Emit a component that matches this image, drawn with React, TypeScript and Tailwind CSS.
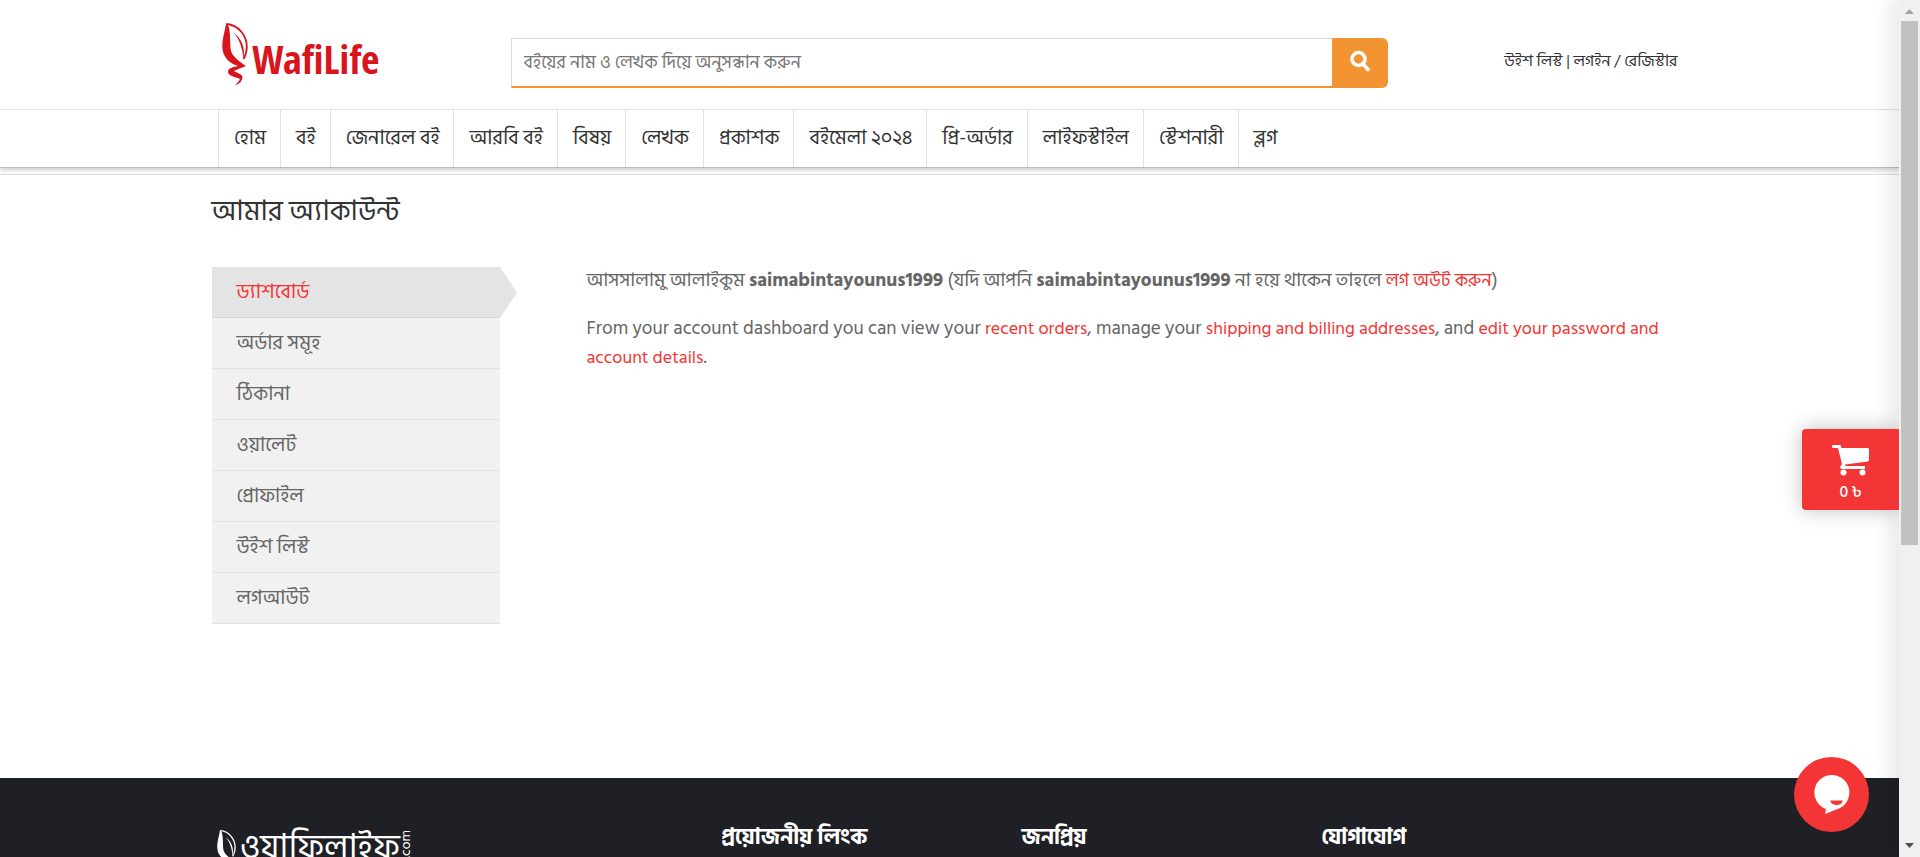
import type { ReactNode } from "react";

const navItems = [
  "হোম",
  "বই",
  "জেনারেল বই",
  "আরবি বই",
  "বিষয়",
  "লেখক",
  "প্রকাশক",
  "বইমেলা ২০২৪",
  "প্রি-অর্ডার",
  "লাইফস্টাইল",
  "স্টেশনারী",
  "ব্লগ",
];

const accountLinks = ["অর্ডার সমূহ", "ঠিকানা", "ওয়ালেট", "প্রোফাইল", "উইশ লিস্ট", "লগআউট"];

function Leaf({ className }: { className: string }) {
  return (
    <svg viewBox="0 0 26 63" className={className} fill="currentColor" aria-hidden="true">
      <path d="M4 0C3 9 .3 14 .3 24 .5 35 9 41 16 43c-5 1-10 2-10 6 0 4 8 5 12 7-1 2.500-3 4-5 6 5-1 7-4 7.500-8C20 51 15 50 12 48c3-2 8-3 12-5C17 38 11 34 9 28 7.500 21 9 11 6.500 3Z" />
      <path d="M4.500 1C17 2 24.800 13 24.800 24c0 5-1.500 9-3.300 12" fill="none" stroke="currentColor" strokeWidth="1.800" />
      <path d="M12 10c7 5 11.500 14 9.500 26C20.500 26 18 17 12 10Z" />
    </svg>
  );
}

function RedLink({ children }: { children: ReactNode }) {
  return (
    <a href="#" className="text-lg leading-[29px] text-[#f33535]">
      {children}
    </a>
  );
}

function Scrollbar() {
  return (
    <div className="flex w-[21px] shrink-0 flex-col items-center bg-[#f0f0f0]" aria-hidden="true">
      <svg viewBox="0 0 21 21" className="h-[21px] w-[21px] shrink-0">
        <path d="M6 14h9l-4.500-5z" fill="#a3a3a3" />
      </svg>
      <div className="h-[524px] w-[17px] bg-[#c1c1c1]" />
      <svg viewBox="0 0 21 21" className="mt-auto h-[21px] w-[21px] shrink-0">
        <path d="M6 7h9l-4.500 5z" fill="#505050" />
      </svg>
    </div>
  );
}

export default function App() {
  return (
    <div className="flex h-screen overflow-hidden bg-white font-['Hind_Siliguri','Noto_Sans_Bengali','Noto_Sans',sans-serif] text-[#666]">
      <div className="relative flex min-w-0 flex-1 flex-col overflow-hidden">
        <header className="shrink-0 border-b border-[#bdbdbd] text-[#333] shadow-[0_2px_5px_rgba(0,0,0,0.2)]">
          <div className="mx-auto flex h-[109px] max-w-[1476px] items-center">
            <a href="#" aria-label="WafiLife" className="ml-2.5 flex w-[289px] items-start text-[#d8141c]">
              <Leaf className="h-[63px] w-[26px]" />
              <svg viewBox="0 0 132 63" className="ml-1 h-[63px] w-[132px]" aria-hidden="true">
                <text x="0" y="51" fontSize="40" fontWeight="700" fill="currentColor" fontFamily="'Liberation Sans Narrow','Open Sans Condensed','DejaVu Sans Condensed',sans-serif">
                  WafiLife
                </text>
              </svg>
            </a>
            <form className="mt-4 flex h-[50px] w-[877px]">
              <input
                type="text"
                aria-label="বইয়ের নাম ও লেখক দিয়ে অনুসন্ধান করুন"
                placeholder="বইয়ের নাম ও লেখক দিয়ে অনুসন্ধান করুন"
                className="min-w-0 flex-1 border border-b-2 border-r-0 border-[#d9d9d9] border-b-[#f39433] px-3 pt-0.5 text-lg text-[#777] outline-none placeholder:text-[#777]"
              />
              <button type="button" aria-label="Search" className="flex w-14 items-center justify-center rounded-r-md bg-[#f39433] pb-1 text-white">
                <svg viewBox="0 0 20 22" className="h-[22px] w-5" fill="none" stroke="currentColor" aria-hidden="true">
                  <circle cx="8.500" cy="9" r="6.500" strokeWidth="3.600" />
                  <path d="m13 14 5 5.500" strokeWidth="3.600" strokeLinecap="round" />
                </svg>
              </button>
            </form>
            <div className="ml-auto mr-2.5 mt-3 text-base">
              <a href="#">উইশ লিস্ট</a> | <a href="#">লগইন / রেজিস্টার</a>
            </div>
          </div>
          <nav className="border-t border-[#e1e1e1]">
            <ul className="mx-auto flex h-[57px] max-w-[1463px]">
              {navItems.map((label) => (
                <li key={label} className="flex border-l border-[#e1e1e1]">
                  <a href="#" className="flex items-center whitespace-nowrap pb-0.5 pl-[15px] pr-3.5 text-xl">
                    {label}
                  </a>
                </li>
              ))}
            </ul>
          </nav>
        </header>
        <div className="mt-1.5 shrink-0 border-t border-[#ddd]" />

        <main className="mx-auto w-full max-w-[1476px] flex-1">
          <h1 className="mt-[17px] text-[28px] leading-[40px] text-[#333]">আমার অ্যাকাউন্ট</h1>
          <div className="mt-[35px] flex">
            <nav className="w-72 shrink-0 text-xl">
              <a href="#" aria-current="page" className="relative flex h-[51px] items-center border-b border-[#d6d6d6] bg-[#e4e4e4] px-[25px] text-[#f33535]">
                ড্যাশবোর্ড
                <svg viewBox="0 0 17 51" className="absolute left-full top-0 h-[51px] w-[17px]" aria-hidden="true">
                  <path d="M0 0 17 25.500 0 51Z" fill="#e4e4e4" />
                </svg>
              </a>
              {accountLinks.map((label) => (
                <a key={label} href="#" className="flex h-[51px] items-center border-b border-[#e2e2e2] bg-[#f1f1f1] px-[25px]">
                  {label}
                </a>
              ))}
            </nav>
            <section className="ml-[87px] flex-1 text-[19px] leading-[29px]">
              <p className="-mt-px">
                আসসালামু আলাইকুম <strong>saimabintayounus1999</strong> (যদি আপনি <strong>saimabintayounus1999</strong> না হয়ে থাকেন তাহলে{" "}
                <RedLink>লগ অউট করুন</RedLink>)
              </p>
              <p className="mt-[19px]">
                From your account dashboard you can view your <RedLink>recent orders</RedLink>, manage your{" "}
                <RedLink>shipping and billing addresses</RedLink>, and <RedLink>edit your password and account details</RedLink>.
              </p>
            </section>
          </div>
        </main>

        <footer className="h-[79px] shrink-0 overflow-hidden bg-[#1f2025] text-white">
          <div className="mx-auto grid max-w-[1476px] grid-cols-[510px_300px_300px_1fr] pt-[45px] text-[22px] font-bold leading-7">
            <div className="flex h-[34px] items-start overflow-hidden pl-[5px] pt-[3px]">
              <Leaf className="h-[54px] w-[19px] shrink-0" />
              <span className="ml-1 text-[34px] font-normal leading-[43px]">ওয়াফিলাইফ</span>
              <span className="mt-1 text-sm font-normal leading-3 [writing-mode:sideways-lr]">.com</span>
            </div>
            <h2>প্রয়োজনীয় লিংক</h2>
            <h2>জনপ্রিয়</h2>
            <h2>যোগাযোগ</h2>
          </div>
        </footer>

        <div className="absolute -right-px top-0 h-full w-px shadow-[0_0_20px_2px_rgba(0,0,0,0.35)]" />
        <button type="button" className="absolute right-0 top-[429px] flex h-[81px] w-[97px] flex-col items-center rounded-l bg-[#f33535] pt-4 text-base font-medium leading-5 text-white shadow-[0_0_20px_rgba(0,0,0,0.25)]">
          <svg viewBox="0 0 37 31" className="mb-1.5 h-[31px] w-[37px] shrink-0" fill="currentColor" aria-hidden="true">
            <path d="M0 0h8.500l1 3H36l1 1v11l-1 1.500-23 3 .5 1.500H33v3H9l-1-2 2-3L6 3H1L0 2Z" />
            <circle cx="11.500" cy="27.500" r="3" />
            <circle cx="30.500" cy="27.500" r="3" />
          </svg>
          0 ৳
        </button>
        <button type="button" aria-label="Chat" className="absolute bottom-[25px] right-[30px] flex h-[75px] w-[75px] items-center justify-center rounded-full bg-[#f33535]">
          <svg viewBox="0 0 36 40" className="h-10 w-9" aria-hidden="true">
            <path d="M18 0a17.500 17.500 0 0 1 8 33l-15 6 1-5A17.500 17.500 0 0 1 18 0Z" fill="#fff" />
            <path d="M16 25.500h13c-1.500 6-11 6-13 0Z" fill="#f33535" />
          </svg>
        </button>
      </div>
      <Scrollbar />
    </div>
  );
}
